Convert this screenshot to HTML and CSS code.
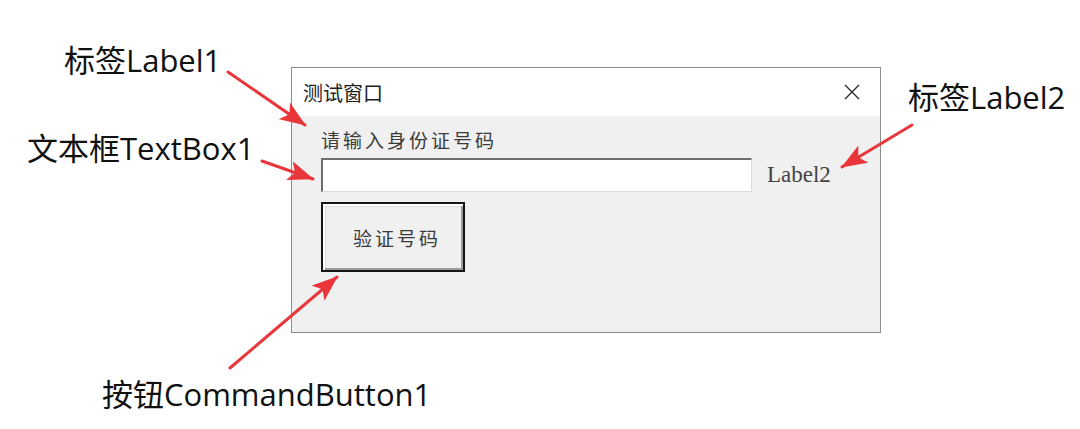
FILE: index.html
```html
<!DOCTYPE html>
<html lang="zh-CN">
<head>
    <meta charset="UTF-8">
    <title>测试窗口</title>
    <link rel="stylesheet" href="styles.css">
</head>
<body>

<div class="stage">
    <div class="window">
        <div class="titlebar">
            <span class="title">测试窗口</span>
            <svg class="close" width="16" height="16" viewBox="0 0 16 16">
                <path d="M1 1 L15 15 M15 1 L1 15" stroke="#2a2a2a" stroke-width="1.4" fill="none"/>
            </svg>
        </div>
        <div class="client">
            <div class="label1">请输入身份证号码</div>
            <div class="input-row">
                <div class="textbox"></div>
                <span class="label2">Label2</span>
            </div>
            <div class="cmd-btn">验证号码</div>
        </div>
    </div>

    <!-- 标注 -->
    <div class="callout callout-label1">标签Label1</div>
    <div class="callout callout-textbox">文本框TextBox1</div>
    <div class="callout callout-label2">标签Label2</div>
    <div class="callout callout-button">按钮CommandButton1</div>

    <svg class="arrows" width="1080" height="429" viewBox="0 0 1080 429">
        <defs>
            <marker id="head" markerUnits="userSpaceOnUse" markerWidth="26" markerHeight="20"
                    viewBox="0 0 26 20" refX="25" refY="10" orient="auto">
                <path d="M0 0 L26 10 L0 20 L6 10 Z" fill="#e8363b"/>
            </marker>
        </defs>
        <g stroke="#e8363b" stroke-width="3" stroke-linecap="round" marker-end="url(#head)">
            <line x1="228" y1="72" x2="305" y2="125"/>
            <line x1="262" y1="161" x2="313" y2="179"/>
            <line x1="912" y1="125" x2="842" y2="167"/>
            <line x1="230" y1="368" x2="337" y2="277"/>
        </g>
    </svg>
</div>

</body>
</html>
```

FILE: styles.css
```css
body {
    margin: 0;
    background-color: #ffffff;
    font-family: "Noto Sans CJK SC", sans-serif;
}

.stage {
    position: relative;
    width: 1080px;
    height: 429px;
    padding: 67px 0 0 291px;
    box-sizing: border-box;
    overflow: hidden;
}

/* 窗体 */
.window {
    width: 590px;
    height: 266px;
    box-sizing: border-box;
    border: 1px solid #8c8c8c;
    display: flex;
    flex-direction: column;
}

.titlebar {
    height: 48px;
    flex: none;
    background-color: #ffffff;
    display: flex;
    align-items: center;
    justify-content: space-between;
    padding: 0 20px 0 11px;
}

.title {
    font-size: 20px;
    color: #1e1e1e;
}

.client {
    flex: 1;
    background-color: #f0f0f0;
    padding: 12px 0 0 29px;
}

.label1 {
    font-size: 19px;
    line-height: 24px;
    letter-spacing: 3px;
    color: #3a3a3a;
}

.input-row {
    display: flex;
    align-items: center;
    gap: 15px;
    margin-top: 6px;
}

.textbox {
    width: 431px;
    height: 34px;
    box-sizing: border-box;
    background-color: #ffffff;
    border-style: solid;
    border-width: 2px 1px 1px 2px;
    border-color: #6e6e6e #dcdcdc #dcdcdc #6e6e6e;
}

.label2 {
    font-family: "Liberation Serif", serif;
    font-size: 23px;
    color: #444;
}

.cmd-btn {
    margin-top: 10px;
    width: 144px;
    height: 70px;
    box-sizing: border-box;
    border: 2px solid #151515;
    box-shadow: inset 2px 2px #ffffff, inset -2px -2px #9c9c9c, inset 3px 3px #dedede;
    background-color: #f0f0f0;
    display: flex;
    align-items: center;
    justify-content: center;
    padding-left: 8px;
    font-size: 19px;
    letter-spacing: 3px;
    color: #3a3a3a;
}

/* 标注文字 */
.callout {
    position: absolute;
    font-family: "Open Sans", "Noto Sans CJK SC", sans-serif;
    font-size: 31px;
    line-height: 30px;
    color: #111;
    white-space: nowrap;
}

.callout-label1 { left: 64px; top: 45px; }
.callout-textbox { left: 27px; top: 133px; }
.callout-label2 { left: 908px; top: 82px; }
.callout-button { left: 102px; top: 379px; }

.arrows {
    position: absolute;
    left: 0;
    top: 0;
    pointer-events: none;
}
```
